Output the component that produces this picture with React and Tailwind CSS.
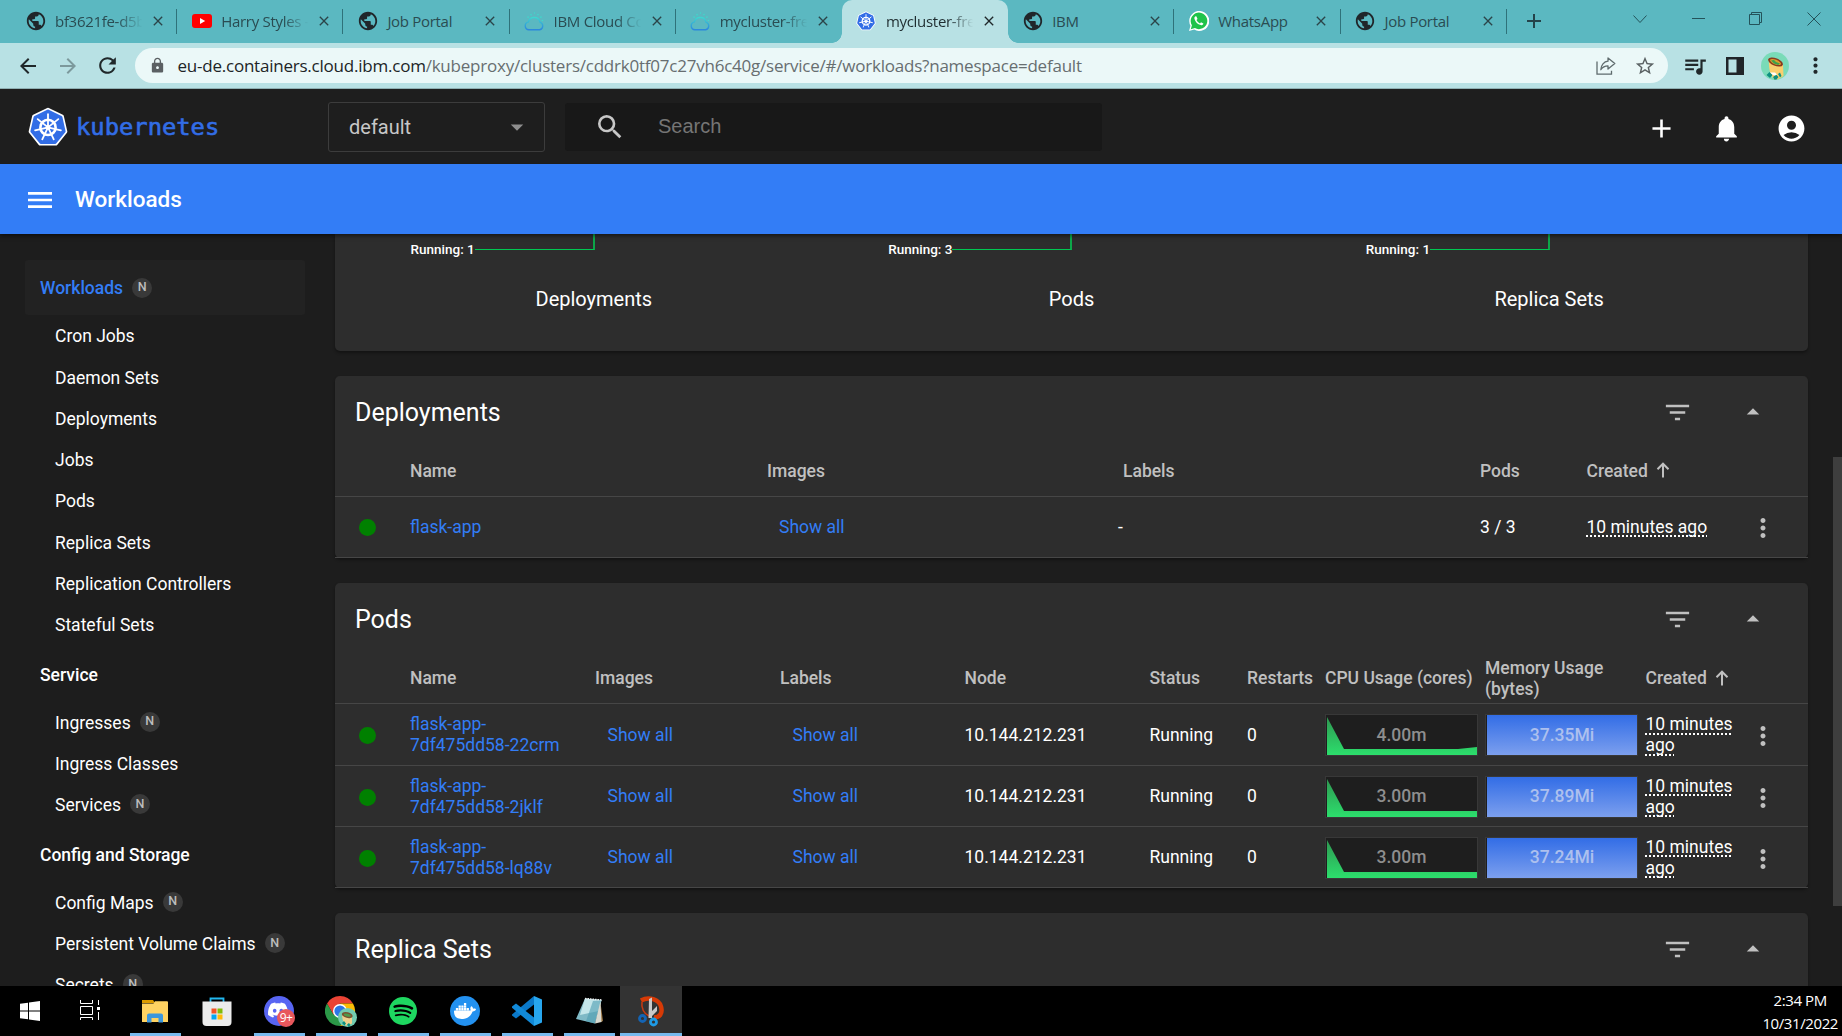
import React from "react";
import {
  MdAdd, MdNotifications, MdAccountCircle, MdSearch, MdMenu, MdFilterList,
  MdArrowDropDown, MdArrowDropUp, MdMoreVert, MdPublic, MdLock, MdArrowBack,
  MdArrowForward, MdRefresh, MdStarBorder, MdQueueMusic, MdClose,
} from "react-icons/md";
import { SiDiscord, SiSpotify, SiDocker } from "react-icons/si";

const SEGOE = "font-['Open_Sans','Noto_Sans',sans-serif]";

function KubeLogo({ size }) {
  const pts = (r) =>
    Array.from({ length: 7 }, (_, i) => {
      const a = (i * 2 * Math.PI) / 7 - Math.PI / 2;
      return `${50 + r * Math.cos(a)},${51.5 + r * Math.sin(a)}`;
    }).join(" ");
  return (
    <svg width={size} height={size} viewBox="0 0 100 100" className="block shrink-0">
      <polygon points={pts(45)} fill="#fff" stroke="#fff" strokeWidth="9" strokeLinejoin="round" />
      <polygon points={pts(41)} fill="#326de6" stroke="#326de6" strokeWidth="8" strokeLinejoin="round" />
      <circle cx="50" cy="51" r="19" fill="none" stroke="#fff" strokeWidth="6.5" />
      {Array.from({ length: 7 }, (_, i) => (
        <g key={i} transform={`rotate(${(i * 360) / 7} 50 51)`}>
          <line x1="50" y1="46" x2="50" y2="18" stroke="#fff" strokeWidth="4.5" strokeLinecap="round" />
        </g>
      ))}
      <circle cx="50" cy="51" r="6" fill="#fff" />
    </svg>
  );
}

function YouTubeIcon() {
  return (
    <svg width="20" height="14" viewBox="0 0 20 14">
      <rect width="20" height="14" rx="3" fill="#f00" />
      <path d="M8 4v6l5.2-3z" fill="#fff" />
    </svg>
  );
}

function CloudIcon() {
  return (
    <svg width="21" height="19" viewBox="0 0 21 19" fill="none">
      <defs>
        <linearGradient id="cloud" x1="0" y1="0" x2="0" y2="1">
          <stop offset="0" stopColor="#3ed6d0" />
          <stop offset="1" stopColor="#2b86dd" />
        </linearGradient>
      </defs>
      <path d="M5 17.8a4 4 0 0 1-.6-7.9 6 6 0 0 1 11.6.2 4 4 0 0 1-.4 7.7z" stroke="url(#cloud)" strokeWidth="1.4" />
      <g stroke="#3fd8cc" strokeWidth="1.5" strokeLinecap="round">
        <path d="M4 5l.1.1M7 2.6l.1.1M10.5 .9v.2M14 2.5l-.1.2M17 5l-.1.1M18.5 8.500h-.2" />
      </g>
    </svg>
  );
}

function WhatsAppIcon() {
  return (
    <svg width="20" height="20" viewBox="0 0 20 20">
      <path d="M0 20l1.5-5.2A10 10 0 1 1 5.2 18.6z" fill="#fff" />
      <path d="M1.8 18.2l1.1-4A8.3 8.3 0 1 1 5.9 17.1z" fill="#1fc34a" />
      <path d="M6.500 5.300c-.9.5-1.3 1.5-1 2.6.8 3 3.2 5.4 6.2 6.2 1.3.3 2.5-.5 2.7-1.7l-2.4-1.2-1 1.2c-1.6-.7-2.8-1.9-3.5-3.4l1-1-1-2.5z" fill="#fff" />
    </svg>
  );
}

const tabs = [
  { icon: "globe", label: "bf3621fe-d5b", fade: true },
  { icon: "yt", label: "Harry Styles -", fade: true },
  { icon: "globe", label: "Job Portal" },
  { icon: "cloud", label: "IBM Cloud Co", fade: true },
  { icon: "cloud", label: "mycluster-fre", fade: true, last: true },
  { icon: "kube", label: "mycluster-fre", fade: true, active: true },
  { icon: "globe", label: "IBM" },
  { icon: "wa", label: "WhatsApp" },
  { icon: "globe", label: "Job Portal" },
];

function TabIcon({ kind }) {
  if (kind === "yt") return <YouTubeIcon />;
  if (kind === "cloud") return <CloudIcon />;
  if (kind === "kube") return <KubeLogo size={20} />;
  if (kind === "wa") return <WhatsAppIcon />;
  return <MdPublic size={22} className="shrink-0 text-[#20262a]" />;
}

function Tab({ t }) {
  return (
    <div
      className={
        "relative flex h-[43px] w-[166.2px] shrink-0 items-center pb-[1px] pl-[13px] " +
        (t.active ? "rounded-t-[10px] bg-[#b8e1e4]" : "")
      }
    >
      {t.active && (
        <>
          <span className="absolute bottom-0 -left-[10px] size-[10px] bg-[radial-gradient(circle_at_0_0,#5bb8c1_9.5px,#b8e1e4_10px)]" />
          <span className="absolute -right-[10px] bottom-0 size-[10px] bg-[radial-gradient(circle_at_100%_0,#5bb8c1_9.5px,#b8e1e4_10px)]" />
        </>
      )}
      <div className="flex w-[23px] shrink-0 justify-center">
        <TabIcon kind={t.icon} />
      </div>
      <div
        className={
          "ml-[8px] w-[89px] text-[15px] leading-5 tracking-[-0.3px] whitespace-nowrap " +
          (t.active ? "text-[#1f2d30] " : "text-[#2a4c52] ") +
          (t.fade ? "[mask-image:linear-gradient(to_right,black_70%,transparent_98%)]" : "")
        }
      >
        {t.label}
      </div>
      <MdClose size={16} className={"ml-[6px] shrink-0 " + (t.active ? "text-[#20282a]" : "text-[#2b4449]")} />
      {!t.active && !t.last && <span className="absolute top-[9px] right-0 h-[25px] w-px bg-[#2f727a]" />}
    </div>
  );
}

function BrowserChrome() {
  return (
    <div className={SEGOE}>
      <div className="flex h-[43px] bg-[#5bb8c1] pl-[11px]">
        {tabs.map((t, i) => (
          <Tab key={i} t={t} />
        ))}
        <svg width="16" height="16" viewBox="0 0 16 16" className="mt-[13px] ml-[19px]">
          <path d="M8 1v14M1 8h14" stroke="#24434a" strokeWidth="2" />
        </svg>
        <div className="ml-auto flex items-center gap-[44.5px] pr-[21.5px] pb-[6px] text-[#24535a]">
          <svg width="14" height="8" viewBox="0 0 14 8" fill="none" stroke="currentColor">
            <path d="M.5.5L7 7.5 13.5.5" />
          </svg>
          <svg width="13" height="13" viewBox="0 0 13 13" fill="none" stroke="currentColor">
            <path d="M0 6.500h13" />
          </svg>
          <svg width="13" height="13" viewBox="0 0 13 13" fill="none" stroke="currentColor">
            <path d="M.5 2.500h10v10H.5zM2.500 2.500v-2h10v10h-2" />
          </svg>
          <svg width="14" height="14" viewBox="0 0 14 14" fill="none" stroke="currentColor">
            <path d="M.5.5l13 13M13.5.5l-13 13" />
          </svg>
        </div>
      </div>
      <div className="flex h-[46px] items-center border-b border-[#8fb0b3] bg-[#b8e1e4] pl-[15.5px]">
        <MdArrowBack size={24} className="text-[#20282a]" />
        <MdArrowForward size={24} className="ml-[16px] text-[#7c999c]" />
        <MdRefresh size={25} className="ml-[15.5px] text-[#20282a]" />
        <div className="ml-[15px] flex h-[35px] w-[1533px] items-center rounded-full bg-[#ebf8f8] pl-[13.5px]">
          <MdLock size={17} className="text-[#5b6063]" />
          <div className="ml-[12px] text-[17px] tracking-[-0.225px] whitespace-nowrap text-[#676e70]">
            <span className="text-[#202426]">eu-de.containers.cloud.ibm.com</span>
            /kubeproxy/clusters/cddrk0tf07c27vh6c40g/service/#/workloads?namespace=default
          </div>
          <svg width="20" height="18" viewBox="0 0 20 18" fill="none" stroke="#5f6b6d" strokeWidth="1.3" className="ml-auto">
            <path d="M1 4.500v12.700h14.500v-3.500" />
            <path d="M12 1l6.800 5.500L12 12V8.800C8.500 8.800 6.500 10 4.800 12.700 5 8 8 4.500 12 4.200z" strokeLinejoin="round" />
          </svg>
          <MdStarBorder size={22} className="mr-[12px] ml-[18px] text-[#5a6163]" />
        </div>
        <MdQueueMusic size={26} className="ml-[14px] text-[#20282a]" />
        <svg width="18" height="18" viewBox="0 0 18 18" className="ml-[18px]">
          <path d="M0 0h18v18H0zM2.500 2.500v13h8v-13z" fill="#202529" fillRule="evenodd" />
        </svg>
        <svg width="28" height="28" viewBox="0 0 28 28" className="ml-[17px]">
          <circle cx="14" cy="14" r="14" fill="#79dbb8" />
          <path d="M8 8l14 5 .500 11a14 14 0 0 1-9 3.500C9 24 7.500 15 8 8z" fill="#fbcf6e" />
          <ellipse cx="14.500" cy="10" rx="7.800" ry="3.800" transform="rotate(22 14.500 10)" fill="#8a3a1e" />
          <ellipse cx="14.500" cy="10" rx="5.800" ry="2.300" transform="rotate(22 14.500 10)" fill="#d9a02c" />
          <path d="M10 8.500l3-.5 2 2 4 1.500-2 1.500-4-1.500z" fill="#3fa34d" />
          <path d="M5.500 23l3-3 3 3-2.500 3zM12 25l3-2.500 2.500 2.500-2 2.500-2 .2zM17 22l2-1.500 1.500 3.500-1.500 1.500z" fill="#0d9080" />
          <path d="M9 20.500l3 2.500 2 .500 2-1-2-2z" fill="#fff" />
        </svg>
        <MdMoreVert size={25} className="ml-[13.5px] text-[#20282a]" />
      </div>
    </div>
  );
}

function KubeHeader() {
  return (
    <>
      <div className="flex h-[75px] items-center bg-[#1e1e1e]">
        <div className="flex w-[328px] items-center pl-[28px]">
          <KubeLogo size={40} />
          <span className="mt-[3px] ml-[8px] font-['DejaVu_Sans_Mono',monospace] text-[23.8px] leading-none text-[#326de6] [-webkit-text-stroke:0.6px_#326de6]">
            kubernetes
          </span>
        </div>
        <div className="flex h-[50px] w-[217px] items-center justify-between rounded-[3px] border border-[#3c3c3c] pr-[12px] pl-[20px] text-[20px] text-[#c7c7c7]">
          default
          <MdArrowDropDown size={30} className="text-[#8e8e8e]" />
        </div>
        <div className="ml-[20px] flex h-[48px] w-[537px] items-center rounded-[3px] bg-[#181818] pl-[29px]">
          <MdSearch size={32} className="text-[#c7c7c7]" />
          <span className="mb-[2px] ml-[32px] font-['Liberation_Sans',Arial,sans-serif] text-[20px] text-[#757575]">Search</span>
        </div>
        <div className="mt-[3px] ml-auto flex gap-[35px] pr-[35.5px] text-white">
          <MdAdd size={31} className="-mr-px" />
          <MdNotifications size={31} className="-mr-px" />
          <MdAccountCircle size={31} />
        </div>
      </div>
      <div className="relative z-10 flex h-[70px] items-center bg-[#337df6] pt-[1px] pl-[24px] text-white shadow-[0_2px_4px_rgba(0,0,0,0.5)]">
        <MdMenu size={32} />
        <span className="ml-[19px] text-[22.5px] font-medium">Workloads</span>
      </div>
    </>
  );
}

const nav = [
  { title: "Workloads", n: true, active: true, items: [["Cron Jobs"], ["Daemon Sets"], ["Deployments"], ["Jobs"], ["Pods"], ["Replica Sets"], ["Replication Controllers"], ["Stateful Sets"]] },
  { title: "Service", items: [["Ingresses", true], ["Ingress Classes"], ["Services", true]] },
  { title: "Config and Storage", items: [["Config Maps", true], ["Persistent Volume Claims", true], ["Secrets", true]] },
];

function Badge() {
  return (
    <span className="-mt-[2px] ml-[9px] flex size-[20px] items-center justify-center rounded-full bg-[#393939] text-[12.5px] font-medium text-[#bdbdbd]">
      N
    </span>
  );
}

function Sidebar() {
  return (
    <nav className="h-full w-[335px] shrink-0 overflow-hidden pt-[26px] pl-[25px] text-[17.5px] text-white">
      {nav.map((g) => (
        <div key={g.title}>
          <div className="h-[56.25px]">
            <div
              className={
                "flex h-[55px] w-[280px] items-center rounded-[3px] pt-[2px] pl-[15px] font-medium " +
                (g.active ? "bg-[#222222] text-[#337df6]" : "")
              }
            >
              {g.title}
              {g.n && <Badge />}
            </div>
          </div>
          {g.items.map(([label, n]) => (
            <div key={label} className="flex h-[41.25px] items-center pb-[1px] pl-[30px]">
              {label}
              {n && <Badge />}
            </div>
          ))}
        </div>
      ))}
    </nav>
  );
}

function CardTitle({ children }) {
  return (
    <div className="flex h-[70px] items-center pr-[40px] pl-[20px]">
      <h2 className="mt-[2px] text-[25px] text-white">{children}</h2>
      <MdFilterList size={31} className="mt-[2px] ml-auto text-[#c0c0c0]" />
      <MdArrowDropUp size={30} className="mt-[2px] ml-[45px] text-[#c0c0c0]" />
    </div>
  );
}

const CARD = "w-[1473px] shrink-0 rounded-[5px] bg-[#2d2d2d] shadow-[0_2px_3px_rgba(0,0,0,0.35)]";

function SortHead() {
  return (
    <span className="flex items-center">
      Created
      <svg width="14" height="16" viewBox="0 0 14 16" fill="none" stroke="#c0c0c0" strokeWidth="2" className="-mt-[2px] ml-[8px]">
        <path d="M7 15.500V2M1.500 7.200L7 1.700l5.500 5.500" />
      </svg>
    </span>
  );
}

function Ago({ children }) {
  return (
    <span className="leading-[21px] underline decoration-dotted decoration-[1.5px] underline-offset-[3px] [text-decoration-skip-ink:none]">
      {children}
    </span>
  );
}

const Dot = () => <span className="mt-[1px] ml-[24px] size-[17px] rounded-full bg-[#008000]" />;
const Link = ({ children, className = "" }) => <span className={"text-[#337df6] " + className}>{children}</span>;
const Menu = () => <MdMoreVert size={30} className="mt-[2px] justify-self-center text-[#c0c0c0]" />;

const D_GRID = "grid grid-cols-[75px_357px_356px_357px_106.5px_146.5px_60px] items-center";
const P_GRID = "grid grid-cols-[75px_185px_185px_184.5px_185px_97.5px_78px_160px_160.5px_87.5px_60px] items-center pt-[1px]";

function Deployments() {
  return (
    <section className={CARD}>
      <CardTitle>Deployments</CardTitle>
      <div className={D_GRID + " h-[51px] border-b border-[#464646] font-medium text-[#c0c0c0]"}>
        <span />
        <span>Name</span>
        <span>Images</span>
        <span>Labels</span>
        <span>Pods</span>
        <SortHead />
      </div>
      <div className={D_GRID + " h-[61px] border-b border-[#464646] text-white"}>
        <Dot />
        <Link>flask-app</Link>
        <Link className="ml-[12px]">Show all</Link>
        <span className="-ml-[5px]">-</span>
        <span>3 / 3</span>
        <Ago>10 minutes ago</Ago>
        <Menu />
      </div>
    </section>
  );
}

const pods = [
  { id: "22crm", cpu: "4.00m", mem: "37.35Mi", h: "h-[62px]", path: "M1 2L18 34H132L151 32V40H1z" },
  { id: "2jklf", cpu: "3.00m", mem: "37.89Mi", h: "h-[61px]", path: "M1 2L18 34H151V40H1z" },
  { id: "lq88v", cpu: "3.00m", mem: "37.24Mi", h: "h-[61px]", path: "M1 2L18 34H151V40H1z" },
];

function CpuSpark({ path, label }) {
  return (
    <div className="relative flex h-[42px] w-[153px] items-center justify-center border border-[#383838] bg-[#1e1e1e] font-medium text-[#8e8e8e]">
      <svg width="151" height="40" viewBox="0 0 151 40" className="absolute inset-0">
        <defs>
          <linearGradient id="cpu" gradientUnits="userSpaceOnUse" x1="0" y1="0" x2="0" y2="40">
            <stop offset="0" stopColor="#2f9450" />
            <stop offset="1" stopColor="#2cde6c" />
          </linearGradient>
        </defs>
        <path d={path} fill="url(#cpu)" />
      </svg>
      <span className="relative">{label}</span>
    </div>
  );
}

function MemSpark({ label }) {
  return (
    <div className="h-[42px] w-[153px] border border-[#383838] bg-[#1e1e1e] pl-px">
      <div className="flex h-full items-center justify-center bg-[linear-gradient(#326de6,#7c9fee)] font-medium text-[#adc0ee]">
        {label}
      </div>
    </div>
  );
}

function Pods() {
  return (
    <section className={CARD}>
      <CardTitle>Pods</CardTitle>
      <div className={P_GRID + " h-[51px] border-b border-[#464646] font-medium text-[#c0c0c0]"}>
        <span />
        <span>Name</span>
        <span>Images</span>
        <span>Labels</span>
        <span>Node</span>
        <span>Status</span>
        <span>Restarts</span>
        <span>CPU Usage (cores)</span>
        <span className="leading-[21px]">
          Memory Usage
          <br />
          (bytes)
        </span>
        <SortHead />
      </div>
      {pods.map((p) => (
        <div key={p.id} className={P_GRID + " border-b border-[#464646] text-white " + p.h}>
          <Dot />
          <Link className="leading-[21px]">
            flask-app-
            <br />
            7df475dd58-{p.id}
          </Link>
          <Link className="ml-[12.5px]">Show all</Link>
          <Link className="ml-[12.5px]">Show all</Link>
          <span>10.144.212.231</span>
          <span>Running</span>
          <span>0</span>
          <CpuSpark path={p.path} label={p.cpu} />
          <MemSpark label={p.mem} />
          <Ago>
            10 minutes
            <br />
            ago
          </Ago>
          <Menu />
        </div>
      ))}
    </section>
  );
}

const stats = [
  ["Deployments", 1],
  ["Pods", 3],
  ["Replica Sets", 1],
];

function Status() {
  return (
    <section className={CARD + " grid h-[117px] grid-cols-3 rounded-t-none px-[20px]"}>
      {stats.map(([name, n]) => (
        <div key={name} className="text-center text-white">
          <div className="flex h-[30px] pl-[55.5px]">
            <div className="flex w-[184px] items-start">
              <span className="mt-[5px] text-[13.5px] leading-[20px] font-medium">Running: {n}</span>
              <span className="h-[16px] flex-1 border-r-2 border-b border-r-[#0da649] border-b-[#00c752]" />
            </div>
          </div>
          <div className="mt-[23px] text-[20px] leading-6">{name}</div>
        </div>
      ))}
    </section>
  );
}

function TaskItem({ open, active, children }) {
  return (
    <div className={"flex h-[50px] w-[62px] flex-col items-center justify-center " + (active ? "bg-[#333333]" : "")}>
      <div className="flex h-[47px] items-center justify-center pt-[3px]">{children}</div>
      <span className={"h-[3px] " + (active ? "w-[62px] " : "w-[51px] ") + (open || active ? "bg-[#76b9ed]" : "")} />
    </div>
  );
}

function Taskbar() {
  return (
    <div className={SEGOE + " flex h-[50px] bg-black text-white"}>
      <div className="flex w-[60px] justify-center pt-[15px]">
        <svg width="20" height="20" viewBox="0 0 20 20" fill="#fff">
          <path d="M0 2.800L8 1.700v7.800H0zM9 1.500L20 0v9.500H9zM0 10.500h8v7.800L0 17.200zM9 10.500h11V20L9 18.500z" />
        </svg>
      </div>
      <div className="flex w-[64px] pt-[14px] pl-[20px]">
        <svg width="20" height="20" viewBox="0 0 20 20" fill="none" stroke="#fff">
          <path d="M.5 0v3.500h12V0M.5 6.500h12v8H.5zM.5 20v-2.500h12V20M18.500 0v5M18.500 12v8" />
          <path d="M17 7h3v3h-3z" fill="#fff" stroke="none" />
        </svg>
      </div>
      <TaskItem open>
        <svg width="26" height="23" viewBox="0 0 26 23">
          <path d="M0 0h11l2 3H0z" fill="#dc9a00" />
          <path d="M0 3.500h11.500L13 1.200h12a1 1 0 0 1 1 1V22H0z" fill="#ffd262" />
          <path d="M5 22v-6.500a2 2 0 0 1 2-2h12a2 2 0 0 1 2 2V22.500h-4.500V18h-7v4.500H5z" fill="#3c96dd" />
        </svg>
      </TaskItem>
      <TaskItem>
        <svg width="30" height="30" viewBox="0 0 30 30">
          <path d="M8.500 7V2.500h13V7" fill="none" stroke="#22b8f0" strokeWidth="1.8" />
          <path d="M.5 5.500h29V26a4 4 0 0 1-4 4h-21a4 4 0 0 1-4-4z" fill="#ebebeb" />
          <path d="M9.500 12.500h5v5h-5z" fill="#f35325" />
          <path d="M15.500 12.500h5v5h-5z" fill="#81bc06" />
          <path d="M9.500 18.500h5v5h-5z" fill="#05a6f0" />
          <path d="M15.500 18.500h5v5h-5z" fill="#ffba08" />
        </svg>
      </TaskItem>
      <TaskItem open>
        <div className="relative flex size-[30px] items-center justify-center rounded-full bg-[#5865f2]">
          <SiDiscord size={20} className="mr-[2px] mb-[2px]" />
          <span className="absolute -right-[1px] -bottom-[1px] flex size-[18px] items-center justify-center rounded-full bg-[#e8575c] text-[12px] leading-none tracking-[-0.5px]">
            9+
          </span>
        </div>
      </TaskItem>
      <TaskItem open>
        <svg width="32" height="32" viewBox="0 0 32 32">
          <path d="M15 1a15 15 0 0 1 13 7.5H15L8.500 20 2 8.500A15 15 0 0 1 15 1z" fill="#ea4335" />
          <path d="M28 8.500A15 15 0 0 1 15 31l6.500-11.200L15 8.500z" fill="#fbbc05" />
          <path d="M2 8.500A15 15 0 0 0 15 31l6.500-11.200-13 0z" fill="#2b9847" />
          <circle cx="15" cy="16" r="7" fill="#fff" />
          <circle cx="15" cy="16" r="5.6" fill="#2c77e5" />
          <circle cx="22.500" cy="22.500" r="9.500" fill="#72cbb0" />
          <path d="M17 19l10 2 0 7.500a10 10 0 0 1-6.500 2c-2-2.500-3.500-6.500-3.500-11.500z" fill="#efd08c" />
          <ellipse cx="22.500" cy="20" rx="5.500" ry="2.800" transform="rotate(14 22 19)" fill="#7a5230" />
          <ellipse cx="22.500" cy="20" rx="3.500" ry="1.400" transform="rotate(14 22 19)" fill="#4f9a4a" />
          <path d="M17 28l2-2 2 2.500-1.500 2zM22 29.500l2-1.500 1.500 2-2 2z" fill="#0d9080" />
        </svg>
      </TaskItem>
      <TaskItem open>
        <SiSpotify size={28} className="text-[#1ed760]" />
      </TaskItem>
      <TaskItem open>
        <div className="flex size-[30px] items-center justify-center rounded-full bg-[#2391f0]">
          <SiDocker size={22} />
        </div>
      </TaskItem>
      <TaskItem open>
        <svg width="30" height="30" viewBox="0 0 30 30">
          <path d="M22 0v8.500L4 22.500 0 19.500v-1z" fill="#0a78c8" />
          <path d="M22 30v-8.500L4 7.500 0 10.500v1.200z" fill="#1189d8" />
          <path d="M22 0L30 3.500V26.500L22 30z" fill="#27a6ee" />
        </svg>
      </TaskItem>
      <TaskItem open>
        <svg width="29" height="28" viewBox="0 0 29 28">
          <path d="M25 2l3 22-2 1z" fill="#9a7440" />
          <path d="M10 1.500L26.500 3 20 26.500 1 22z" fill="#7fb9c6" />
          <path d="M10 1.500L26.500 3l-3 11L5 18z" fill="#c4e6ea" />
          <path d="M18 4l8.500-1L20 26.500 11 24.300z" fill="#4f9cb0" fillOpacity=".6" />
          <path d="M25.500 4l1 21-6.500 1.500z" fill="#d9d9d0" />
          <path d="M10 1.500L26.500 3" stroke="#eee" strokeWidth="1.5" strokeDasharray="1.5 1" />
        </svg>
      </TaskItem>
      <TaskItem active>
        <svg width="26" height="31" viewBox="0 0 26 31" fill="none">
          <path d="M3 4.500c8-4.500 18-1 20 6s-1.500 11-7 11" stroke="#d63a06" strokeWidth="4.5" />
          <path d="M4 6c-1 6 2 12 7 14" stroke="#c23a12" strokeWidth="1.6" />
          <path d="M11 3l3-1.500V22h-3.500zM13 16l6-6v5l-5 5z" fill="#c9c9c9" />
          <circle cx="4.500" cy="22.500" r="3" stroke="#1464b4" strokeWidth="2.8" />
          <circle cx="15.500" cy="26" r="3" stroke="#1e9be6" strokeWidth="2.8" />
        </svg>
      </TaskItem>
      <div className="mt-[3px] mr-[4px] ml-auto text-center text-[15px] leading-[22.5px] tracking-[-0.4px]">
        <div>2:34 PM</div>
        <div>10/31/2022</div>
      </div>
    </div>
  );
}

export default function App() {
  return (
    <div className="flex h-[1036px] w-[1842px] flex-col overflow-hidden bg-[#1d1d1d] font-[Roboto,sans-serif]">
      <BrowserChrome />
      <KubeHeader />
      <div className="flex h-[752px] overflow-hidden">
        <Sidebar />
        <main className="flex flex-1 flex-col gap-[25px] text-[17.5px] leading-[21px] whitespace-nowrap">
          <Status />
          <Deployments />
          <Pods />
          <section className={CARD + " h-[200px]"}>
            <CardTitle>Replica Sets</CardTitle>
          </section>
        </main>
        <div className="mt-[223px] h-[449px] w-[9px] bg-[#3e3e3e]" />
      </div>
      <Taskbar />
    </div>
  );
}
